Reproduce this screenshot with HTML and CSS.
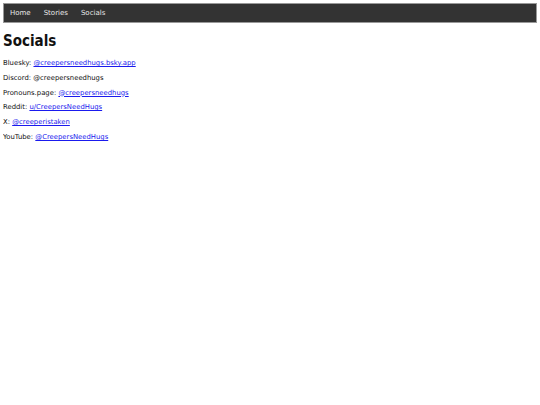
FILE: index.html
```html
<!DOCTYPE html>
<html>
<head>
<meta charset="utf-8">
<link rel="stylesheet" href="styles.css">
</head>
<body>
<nav class="nav">
  <a class="nav-link" href="#">Home</a>
  <a class="nav-link" href="#">Stories</a>
  <a class="nav-link" href="#">Socials</a>
</nav>
<h1 class="title">Socials</h1>
<p class="line">Bluesky: <a href="#">@creepersneedhugs.bsky.app</a></p>
<p class="line">Discord: @creepersneedhugs</p>
<p class="line">Pronouns.page: <a href="#">@creepersneedhugs</a></p>
<p class="line">Reddit: <a href="#">u/CreepersNeedHugs</a></p>
<p class="line">X: <a href="#">@creeperistaken</a></p>
<p class="line">YouTube: <a href="#">@CreepersNeedHugs</a></p>
</body>
</html>
```
FILE: styles.css
```css
body {
  margin: 3px;
  font-family: "DejaVu Sans", Verdana, sans-serif;
  font-size: 6.85px;
  color: #111;
  background: #fff;
}
.nav {
  display: flex;
  background: #333;
  border: 1px solid #999;
  height: 18px;
  align-items: center;
  padding: 0 6px;
  gap: 13px;
}
.nav-link {
  color: #e8e8e8;
  text-decoration: none;
  font-size: 7px;
}
.title {
  font-family: "DejaVu Sans Condensed", "DejaVu Sans", sans-serif;
  font-size: 15px;
  font-weight: bold;
  margin: 9px 0 9px;
  line-height: 18px;
}
.line {
  margin: 0 0 6.3px;
  line-height: 8.5px;
}
a {
  color: #1a1aee;
}
```
